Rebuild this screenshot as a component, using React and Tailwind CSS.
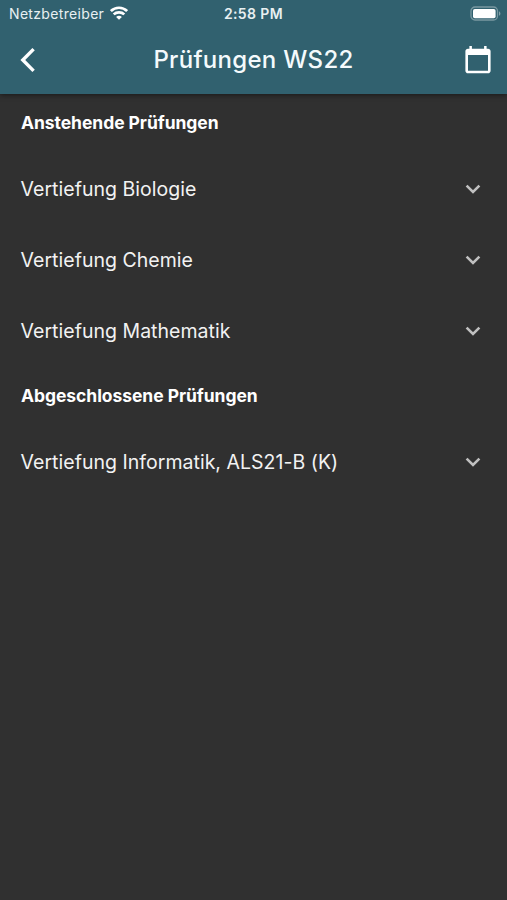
import React from 'react';

const UPCOMING = ['Vertiefung Biologie', 'Vertiefung Chemie', 'Vertiefung Mathematik'];
const COMPLETED = ['Vertiefung Informatik, ALS21-B (K)'];

const WifiIcon = () => (
  <svg className="mb-0.5" width="18" height="14" viewBox="0 0 18 14" fill="none" stroke="#fff" strokeWidth="2.7">
    <path d="M0.9 5.1C5.4 0.6 12.6 0.6 17.1 5.1" />
    <path d="M3.7 8.4C6.6 5.6 11.4 5.6 14.3 8.4" />
    <path d="M9 13.8L6.1 10.9C7.8 9.4 10.2 9.4 11.9 10.9Z" fill="#fff" stroke="none" />
  </svg>
);

const BatteryIcon = () => (
  <svg width="32" height="15" viewBox="0 0 32 15">
    <rect x="1" y="1" width="26.5" height="13" rx="4" fill="none" stroke="#fff" strokeOpacity="0.35" strokeWidth="1.3" />
    <rect x="3" y="3" width="22.6" height="9.2" rx="1.8" fill="#fff" />
    <path d="M29 5.2C30.9 6 30.9 9 29 9.8Z" fill="#fff" fillOpacity="0.4" />
  </svg>
);

const BackIcon = () => (
  <svg width="16" height="26" viewBox="0 0 16 26" fill="none" stroke="#fff" strokeWidth="3.4">
    <path d="M13.6 2.1L2.8 13L13.6 23.9" />
  </svg>
);

const CalendarIcon = () => (
  <svg width="26" height="28" viewBox="0 0 26 28" fill="#fff">
    <path
      fillRule="evenodd"
      d="M23 2.7H21.6V0H19.1V2.7H6.9V0H4.4V2.7H3C1.5 2.7 0.4 3.9 0.4 5.3V24.7C0.4 26.2 1.5 27.3 3 27.3H23C24.5 27.3 25.6 26.2 25.6 24.7V5.3C25.6 3.9 24.5 2.7 23 2.7ZM23 24.8H3V9H23Z"
    />
  </svg>
);

const ExpandIcon = () => (
  <svg className="mb-0.5" width="16" height="10" viewBox="0 0 16 10" fill="none" stroke="#c0c0c0" strokeWidth="2.6">
    <path d="M1.6 1.6L8 7.9L14.4 1.6" />
  </svg>
);

const SectionTitle = ({ children }) => (
  <h2 className="flex h-[60px] items-center pb-px pl-[21px] text-[17.5px] font-bold tracking-[-0.06px] text-white">
    {children}
  </h2>
);

const ExamRow = ({ title }) => (
  <button className="flex h-[71px] w-full items-center justify-between pl-[20.5px] pr-[26px] text-left text-[19.5px] tracking-[0.03px] text-[#f2f2f2]">
    <span>{title}</span>
    <ExpandIcon />
  </button>
);

const App = () => (
  <div className="flex h-[900px] w-full flex-col overflow-hidden bg-[#303030] font-['Inter','Liberation_Sans',sans-serif]">
    <header className="z-10 h-[94px] shrink-0 bg-[#31616f] shadow-[0_1px_5px_rgba(0,0,0,0.5)]">
      {/* Status bar */}
      <div className="grid h-[27px] grid-cols-3 items-center text-[#e8f0f2]">
        <div className="flex items-center gap-1.5 pl-[9px]">
          <span className="pb-px text-[14px] tracking-[0.33px]">Netzbetreiber</span>
          <WifiIcon />
        </div>
        <span className="pb-px text-center text-[14px] font-semibold tracking-[0.4px]">2:58 PM</span>
        <div className="flex justify-end pr-[5px]">
          <BatteryIcon />
        </div>
      </div>

      {/* Navigation */}
      <div className="grid h-[66px] grid-cols-[80px_1fr_80px] items-center">
        <button className="pl-5">
          <BackIcon />
        </button>
        <h1 className="text-center text-[24px] font-medium tracking-[0.3px] text-[#f4fafc]">Prüfungen WS22</h1>
        <button className="flex justify-end pr-4">
          <CalendarIcon />
        </button>
      </div>
    </header>

    <main>
      <SectionTitle>Anstehende Prüfungen</SectionTitle>
      {UPCOMING.map(title => <ExamRow key={title} title={title} />)}
      <SectionTitle>Abgeschlossene Prüfungen</SectionTitle>
      {COMPLETED.map(title => <ExamRow key={title} title={title} />)}
    </main>
  </div>
);

export default App;
